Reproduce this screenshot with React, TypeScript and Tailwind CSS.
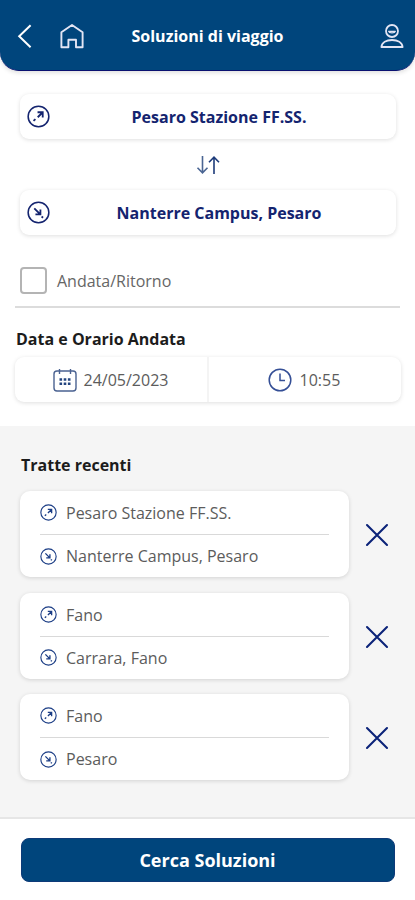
interface Route {
  id: number;
  from: string;
  to: string;
}

const recentRoutes: Route[] = [
  { id: 1, from: 'Pesaro Stazione FF.SS.', to: 'Nanterre Campus, Pesaro' },
  { id: 2, from: 'Fano', to: 'Carrara, Fano' },
  { id: 3, from: 'Fano', to: 'Pesaro' },
];

function DepartureIcon({ size }: { size: number }) {
  return (
    <svg width={size} height={size} viewBox="0 0 24 24" fill="none" stroke="currentColor" strokeWidth="1.6" className="shrink-0" aria-hidden="true">
      <circle cx="12" cy="12" r="10.8" />
      <path d="M11.2 12.8L15.9 8.1M11 7.6h5.4V13" strokeWidth="1.9" />
      <path d="M6.8 16.6l2-1.8" strokeWidth="1.9" />
    </svg>
  );
}

function ArrivalIcon({ size }: { size: number }) {
  return (
    <svg width={size} height={size} viewBox="0 0 24 24" fill="none" stroke="currentColor" strokeWidth="1.6" className="shrink-0" aria-hidden="true">
      <circle cx="12" cy="12" r="10.8" />
      <path d="M7.6 7.6l6 6M14 8.8v5.2H8.8" strokeWidth="1.9" />
      <path d="M15.2 16.2l1.6 1.2" strokeWidth="1.9" />
    </svg>
  );
}

function Header() {
  return (
    <header className="grid h-[71px] grid-cols-[118px_1fr_118px] items-center rounded-b-[19px] border-b border-[#0a1170] bg-[#00457c] pt-px text-white shadow-[0_2px_4px_rgba(0,0,0,0.12)]">
      <div className="flex items-center pl-[17px]">
        <button aria-label="Indietro">
          <svg width="16" height="24" viewBox="0 0 16 24" fill="none" stroke="currentColor" strokeWidth="2" aria-hidden="true">
            <path d="M13.6 1.2L2.2 12.2l11.4 11" />
          </svg>
        </button>
        <button className="ml-[26px]" aria-label="Home">
          <svg width="26" height="26" viewBox="0 0 26 26" fill="none" stroke="#e3e5f4" strokeWidth="1.9" strokeLinejoin="round" aria-hidden="true">
            <path d="M2.4 9.2L13 2l10.6 7.2v15h-6.600v-7.500H9.400v7.500H2.4z" />
          </svg>
        </button>
      </div>
      <h1 className="pt-px text-center text-[16px] font-bold whitespace-nowrap">Soluzioni di viaggio</h1>
      <button className="mr-[10px] justify-self-end" aria-label="Profilo">
        <svg width="26" height="26" viewBox="0 0 26 26" fill="none" stroke="#e3e5f4" strokeWidth="1.8" strokeLinejoin="round" aria-hidden="true">
          <circle cx="13" cy="8" r="6" />
          <path d="M9.600 8.400h6.800c-.6 1.900-6.200 1.900-6.800 0z" strokeWidth="1.200" />
          <path d="M2.400 24c.5-4.600 5-7 10.600-7s10.100 2.400 10.600 7z" />
        </svg>
      </button>
    </header>
  );
}

function SearchForm() {
  return (
    <section className="h-[355px] pt-[23px]">
      <button className="mx-auto flex h-[45px] w-[376px] items-center rounded-[9px] bg-white pr-[8px] pl-[7px] text-[#14246f] shadow-[0_1px_4px_rgba(0,0,0,0.13)]">
        <DepartureIcon size={23} />
        <span className="flex-1 pl-px text-center text-[16px] font-bold">Pesaro Stazione FF.SS.</span>
      </button>

      <div className="flex h-[51px] items-center justify-center">
        <svg width="24" height="20" viewBox="0 0 24 20" fill="none" stroke="#1d3b7a" strokeWidth="1.6" aria-hidden="true">
          <path d="M6.500 1v16.600M1.500 12.800l5 5 5-5" stroke="#4a6593" />
          <path d="M18 19V2.400M13 7.200l5-5 5 5" />
        </svg>
      </div>

      <button className="mx-auto flex h-[45px] w-[376px] items-center rounded-[9px] bg-white pr-[8px] pl-[7px] text-[#14246f] shadow-[0_1px_4px_rgba(0,0,0,0.13)]">
        <ArrivalIcon size={23} />
        <span className="flex-1 pl-px text-center text-[16px] font-bold">Nanterre Campus, Pesaro</span>
      </button>

      <label className="mx-[15px] mt-[19px] flex h-[54px] items-center border-b-2 border-[#dcdcdc] pl-[5px] text-[16px] text-[#666]">
        <input type="checkbox" className="h-[27px] w-[27px] appearance-none rounded-[4px] border-2 border-[#b4b4b4]" />
        <span className="ml-[10px] pt-[2px]">Andata/Ritorno</span>
      </label>

      <h2 className="mt-[19px] ml-[16px] text-[16px] leading-6 font-bold text-[#1c1c1c]">Data e Orario Andata</h2>
      <div className="mx-auto mt-[6px] flex h-[45px] w-[386px] items-center rounded-[9px] bg-white text-[16px] text-[#5c5c5c] shadow-[0_1px_4px_rgba(0,0,0,0.13)]">
        <button className="flex h-full w-[194px] items-center border-r-2 border-[#f4f4f4] pl-[38px]">
          <svg width="24" height="24" viewBox="0 0 24 24" fill="none" stroke="#4a6291" strokeWidth="1.4" aria-hidden="true">
            <rect x="1" y="3" width="22" height="20" rx="3" />
            <path d="M6.500 1v5M17.500 1v5" />
            <path d="M6.500 11.500h2.600M10.700 11.500h2.600M14.900 11.500h2.600M6.500 15.700h2.600M10.700 15.700h2.600M14.900 15.700h2.600" stroke="#23447f" strokeWidth="2.500" />
          </svg>
          <span className="ml-[7px]">24/05/2023</span>
        </button>
        <button className="flex h-full items-center pl-[59px]">
          <svg width="24" height="24" viewBox="0 0 24 24" fill="none" stroke="#354f96" strokeWidth="1.500" aria-hidden="true">
            <circle cx="12" cy="12" r="10.800" />
            <path d="M12 5.500v7h5" />
          </svg>
          <span className="ml-[8px]">10:55</span>
        </button>
      </div>
    </section>
  );
}

function RouteRow({ route }: { route: Route }) {
  return (
    <li className="flex items-center">
      <button className="h-[86px] w-[329px] rounded-[10px] bg-white px-[20px] text-left text-[16px] text-[#5c5c5c] shadow-[0_1px_4px_rgba(0,0,0,0.14)]">
        <span className="flex h-[44px] items-center border-b-[1.5px] border-[#d9d9d9]">
          <span className="flex text-[#1b3d85]">
            <DepartureIcon size={17} />
          </span>
          <span className="ml-[9px] pt-px">{route.from}</span>
        </span>
        <span className="flex h-[42px] items-center">
          <span className="flex text-[#1b3d85]">
            <ArrivalIcon size={17} />
          </span>
          <span className="ml-[9px]">{route.to}</span>
        </span>
      </button>
      <button className="ml-[16px] pt-[2px]" aria-label="Elimina tratta">
        <svg width="24" height="24" viewBox="0 0 24 24" fill="none" stroke="#0b2379" strokeWidth="2.100" strokeLinecap="round" aria-hidden="true">
          <path d="M2 2l20 20M22 2L2 22" />
        </svg>
      </button>
    </li>
  );
}

export default function App() {
  return (
    <main className="flex h-[900px] w-[415px] flex-col overflow-hidden bg-white font-['Open_Sans','Noto_Sans',sans-serif]">
      <Header />
      <SearchForm />
      <section className="h-[391px] bg-[#f5f5f5] pt-[27px] pl-[20px]">
        <h2 className="ml-px text-[16px] leading-6 font-bold text-[#1c1c1c]">Tratte recenti</h2>
        <ul className="mt-[14px] flex flex-col gap-[15.500px]">
          {recentRoutes.map((route) => (
            <RouteRow key={route.id} route={route} />
          ))}
        </ul>
      </section>
      <footer className="flex flex-1 justify-center border-t-2 border-[#e6e6e6] pt-[19px]">
        <button className="h-[44px] w-[374px] rounded-[8px] border border-[#0d3a78] bg-[#00457c] pt-px text-[18px] font-bold text-white">
          Cerca Soluzioni
        </button>
      </footer>
    </main>
  );
}
